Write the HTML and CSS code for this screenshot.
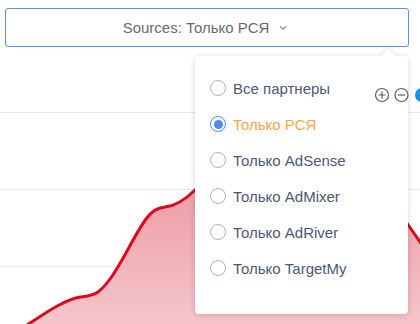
FILE: index.html
```html
<!DOCTYPE html>
<html>
<head>
<meta charset="utf-8">
<link rel="stylesheet" href="styles.css">
</head>
<body>
<div class="page">
  <div class="header">
    <button class="select">
      <span class="select-label">Sources: Только РСЯ</span>
      <svg class="chevron" width="8" height="6" viewBox="0 0 8 6"><path d="M1 1.2 L4 4.2 L7 1.2" fill="none" stroke="#8a8f99" stroke-width="1.3"/></svg>
    </button>
  </div>
  <div class="chart">
    <svg class="chart-svg" width="420" height="277" viewBox="0 47 420 277">
      <defs>
        <linearGradient id="fillg" gradientUnits="userSpaceOnUse" x1="0" y1="150" x2="0" y2="324">
          <stop offset="0" stop-color="#ec939d"/>
          <stop offset="1" stop-color="#f5c5ca"/>
        </linearGradient>
      </defs>
      <line x1="0" y1="112.5" x2="420" y2="112.5" stroke="#e8e8e8" stroke-width="1"/>
      <line x1="0" y1="189.5" x2="420" y2="189.5" stroke="#e8e8e8" stroke-width="1"/>
      <line x1="0" y1="266.5" x2="420" y2="266.5" stroke="#e8e8e8" stroke-width="1"/>
      <path d="M18 332 L30 323 C50 310 65 300 80 297 C88 296 92 296 98 292 C108 284 115 272 122 260 C130 246 138 230 146 219 C152 211 157 208 165 207 C175 206 185 200 195 190 C220 165 260 130 300 140 C350 150 392 200 411 229 L425 249 L425 330 Z" fill="url(#fillg)"/>
      <path d="M18 332 L30 323 C50 310 65 300 80 297 C88 296 92 296 98 292 C108 284 115 272 122 260 C130 246 138 230 146 219 C152 211 157 208 165 207 C175 206 185 200 195 190 C220 165 260 130 300 140 C350 150 392 200 411 229 L425 249" fill="none" stroke="#d90a1e" stroke-width="3" stroke-linejoin="round"/>
    </svg>
  </div>
</div>

<div class="popover">
  <div class="arrow"></div>
  <ul class="options">
    <li class="option"><span class="radio"></span><span class="label">Все партнеры</span></li>
    <li class="option selected"><span class="radio"></span><span class="label">Только РСЯ</span></li>
    <li class="option"><span class="radio"></span><span class="label">Только AdSense</span></li>
    <li class="option"><span class="radio"></span><span class="label">Только AdMixer</span></li>
    <li class="option"><span class="radio"></span><span class="label">Только AdRiver</span></li>
    <li class="option"><span class="radio"></span><span class="label">Только TargetMy</span></li>
  </ul>
</div>

<div class="toolbar">
  <svg width="46" height="16" viewBox="374 87 46 16">
    <circle cx="382" cy="95" r="6.5" fill="none" stroke="#5a5e66" stroke-width="1.2"/>
    <path d="M378.5 95 H385.5 M382 91.5 V98.5" stroke="#5a5e66" stroke-width="1.2"/>
    <circle cx="401.5" cy="95" r="6.5" fill="none" stroke="#5a5e66" stroke-width="1.2"/>
    <path d="M398 95 H405" stroke="#5a5e66" stroke-width="1.2"/>
    <circle cx="422" cy="95" r="7" fill="#1a8cf0"/>
  </svg>
</div>
</body>
</html>
```

FILE: styles.css
```css
html, body {
  margin: 0;
  padding: 0;
}
body {
  width: 420px;
  height: 324px;
  overflow: hidden;
  position: relative;
  background: #ffffff;
  font-family: "Liberation Sans", Arial, sans-serif;
}
.page {
  display: flex;
  flex-direction: column;
}
.header {
  padding: 8px 11px 0 5px;
  position: relative;
  z-index: 2;
}
.select {
  box-sizing: border-box;
  width: 404px;
  height: 39px;
  margin: 0;
  border: 1px solid #5b93e6;
  border-radius: 3px;
  background: #ffffff;
  display: flex;
  align-items: center;
  justify-content: center;
  gap: 10px;
  padding: 0 4px 0 0;
  font-family: "Liberation Sans", Arial, sans-serif;
  font-size: 15px;
  color: #6a6a6a;
}
.chevron {
  display: block;
  margin-top: 1px;
}
.chart {
  height: 277px;
}
.chart-svg {
  display: block;
}
.popover {
  position: absolute;
  left: 195px;
  top: 56px;
  width: 213px;
  height: 258px;
  background: #ffffff;
  border-radius: 4px;
  box-shadow: 0 1px 6px rgba(0, 0, 0, 0.16);
  z-index: 3;
}
.arrow {
  position: absolute;
  left: 188px;
  top: -5px;
  width: 11px;
  height: 11px;
  background: #ffffff;
  transform: rotate(45deg);
  box-shadow: -2px -2px 4px rgba(0, 0, 0, 0.06);
}
.options {
  list-style: none;
  margin: 0;
  padding: 14px 0 0 15px;
  position: relative;
}
.option {
  height: 36px;
  display: flex;
  align-items: center;
  gap: 7px;
  font-size: 15px;
  color: #4b5873;
}
.radio {
  box-sizing: border-box;
  width: 16px;
  height: 16px;
  border: 1px solid #a7b6ca;
  border-radius: 50%;
  background: #ffffff;
  display: flex;
  align-items: center;
  justify-content: center;
}
.option.selected .label {
  color: #ffa53f;
}
.option.selected .radio {
  border-color: #4f89f0;
}
.option.selected .radio::after {
  content: "";
  width: 9px;
  height: 9px;
  border-radius: 50%;
  background: #4f89f0;
}
.toolbar {
  position: absolute;
  left: 374px;
  top: 87px;
  width: 46px;
  height: 16px;
  z-index: 4;
}
.toolbar svg {
  display: block;
}
```
